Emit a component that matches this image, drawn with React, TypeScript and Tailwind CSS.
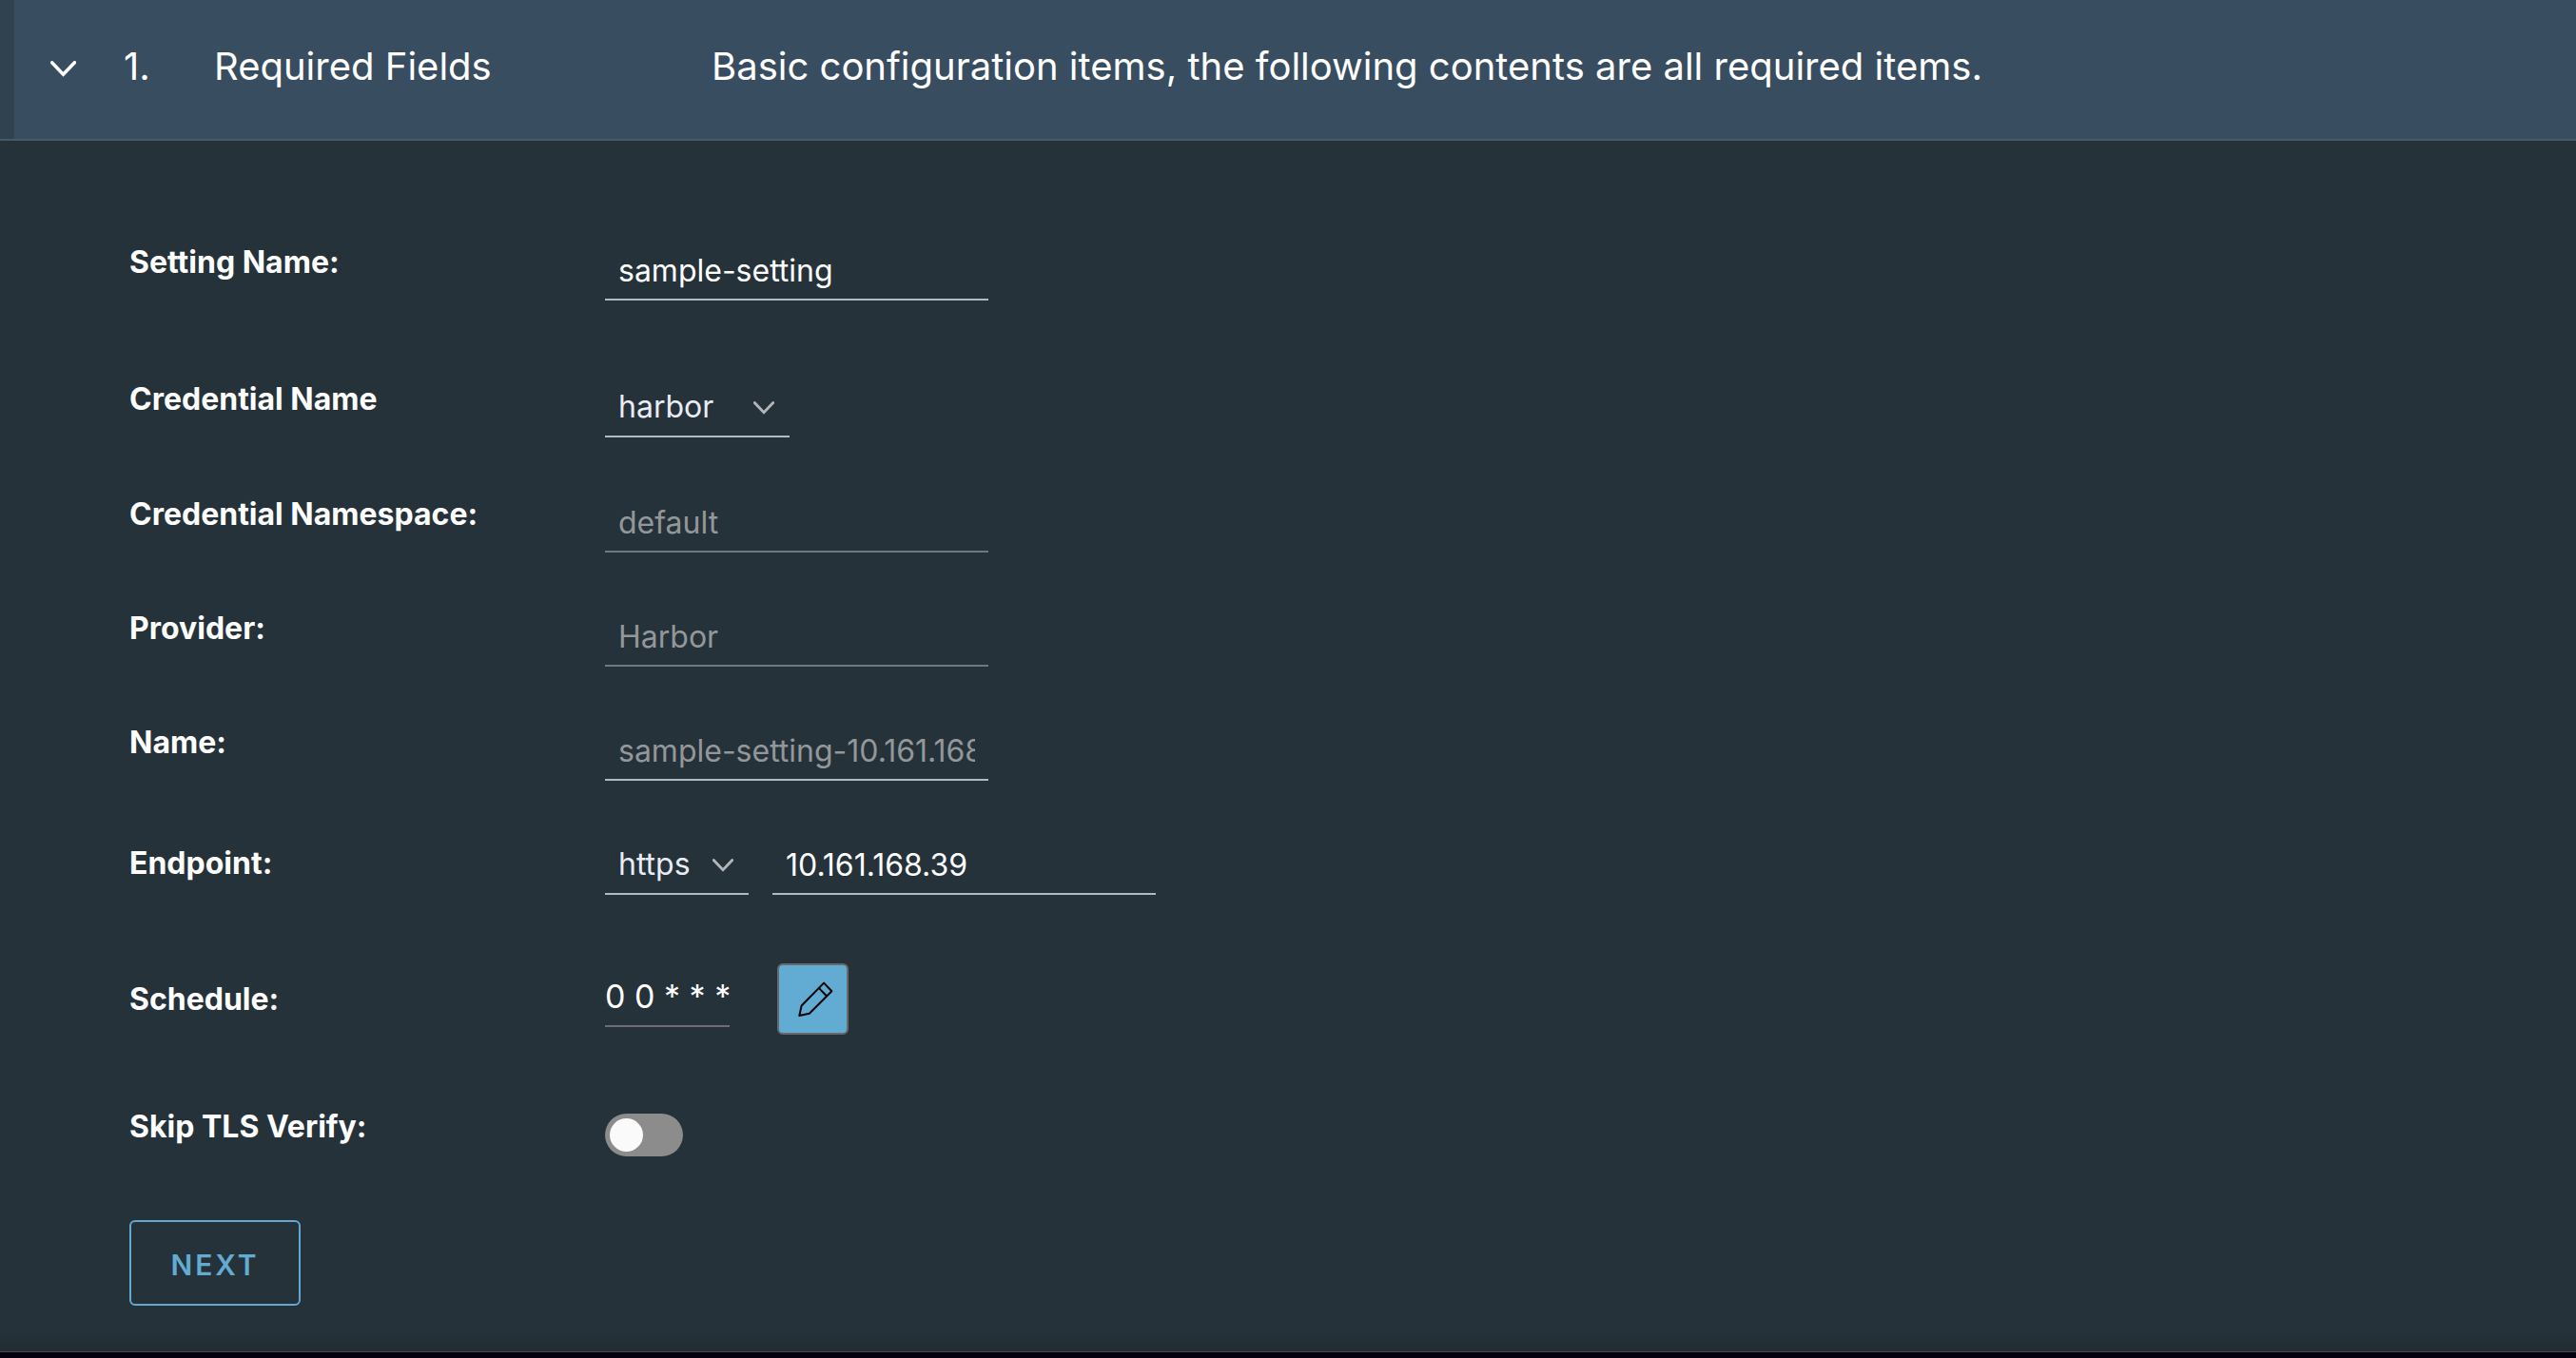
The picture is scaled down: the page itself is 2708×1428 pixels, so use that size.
import { useState, type ReactNode } from "react";

function Chevron({ className }: { className: string }) {
  return (
    <svg viewBox="0 0 26 16" fill="none" stroke="currentColor" strokeLinecap="round" className={className} aria-hidden="true">
      <path d="M1.5 1.5 13 13.5 24.5 1.5" strokeWidth="3.4" />
    </svg>
  );
}

function PencilIcon() {
  return (
    <svg viewBox="0 0 118 118" fill="none" stroke="currentColor" strokeWidth="6" strokeLinejoin="round" className="ml-1.5 size-[39px]" aria-hidden="true">
      <path d="M7 112 14 80 85 8 110 34 39 105Z" />
      <path d="M69 24 94 50" />
    </svg>
  );
}

const inputClass =
  "h-[58px] w-[403px] rounded-none border-b-2 border-[#adbbc4] bg-transparent px-[14px] pb-1 text-[32px] text-white outline-none disabled:border-[#6b7b83] disabled:text-[#949799]";

function Row({ label, htmlFor, className, labelClass = "", children }: {
  label: string;
  htmlFor: string;
  className: string;
  labelClass?: string;
  children: ReactNode;
}) {
  return (
    <div className={`grid grid-cols-[500px_1fr] ${className}`}>
      <label htmlFor={htmlFor} className={`text-[32px] leading-9 font-bold ${labelClass}`}>
        {label}
      </label>
      <div className="flex">{children}</div>
    </div>
  );
}

function Select({ id, options, className, label }: { id: string; options: string[]; className: string; label?: string }) {
  return (
    <div className={`relative ${className}`}>
      <select
        id={id}
        aria-label={label}
        className="h-[58px] w-full appearance-none rounded-none border-b-2 border-[#adbbc4] bg-transparent pr-9 pb-1 pl-[14px] text-[32px] text-[#e9ecf4] outline-none"
      >
        {options.map((o) => (
          <option key={o}>{o}</option>
        ))}
      </select>
      <Chevron className="pointer-events-none absolute top-5 right-4 h-[14px] w-[22px] text-[#b3b5b8]" />
    </div>
  );
}

export default function App() {
  const [name, setName] = useState("sample-setting");
  const [host, setHost] = useState("10.161.168.39");
  return (
    <div className="flex min-h-screen flex-col bg-[#25323a] font-['Inter',sans-serif] text-white">
      <header className="border-b-2 border-[#495a67] bg-[#384d60]">
        <button type="button" aria-expanded="true" className="flex h-[146px] w-full items-start border-l-[15px] border-[#30424f] pt-11 text-left text-[40px] leading-[52px]">
          <Chevron className="mt-5 ml-[38px] h-[17px] w-[27px]" />
          <span className="ml-[50px] w-[95px]">1.</span>
          <span className="w-[523px]">Required Fields</span>
          <span>Basic configuration items, the following contents are all required items.</span>
        </button>
      </header>

      <form className="flex flex-1 flex-col items-stretch px-[136px] pt-[110px]" onSubmit={(e) => e.preventDefault()}>
        <Row label="Setting Name:" htmlFor="setting" className="mb-[86px]">
          <input id="setting" className={inputClass} value={name} onChange={(e) => setName(e.target.value)} />
        </Row>
        <Row label="Credential Name" htmlFor="credential" className="mb-[63px]">
          <Select id="credential" options={["harbor"]} className="w-[194px]" />
        </Row>
        <Row label="Credential Namespace:" htmlFor="namespace" className="mb-[62px]">
          <input id="namespace" className={inputClass} value="default" disabled />
        </Row>
        <Row label="Provider:" htmlFor="provider" className="mb-[62px]">
          <input id="provider" className={inputClass} value="Harbor" disabled />
        </Row>
        <Row label="Name:" htmlFor="name" className="mb-[62px]">
          <input id="name" className={`${inputClass} placeholder:text-[#949799]`} placeholder={`${name}-${host}`} />
        </Row>
        <Row label="Endpoint:" htmlFor="host" className="mb-[72px] items-center" labelClass="pb-2">
          <Select id="scheme" label="Protocol" options={["https", "http"]} className="mr-[25px] w-[151px]" />
          <input id="host" className={inputClass} value={host} onChange={(e) => setHost(e.target.value)} />
        </Row>
        <Row label="Schedule:" htmlFor="schedule" className="mb-[79px] items-center">
          <output id="schedule" className="mr-[50px] h-[67px] w-[131px] border-b-2 border-[#6d6e72] pt-3 text-[34px] leading-[46px] whitespace-nowrap">
            0 0 * * *
          </output>
          <button type="button" aria-label="Edit schedule" className="flex size-[75px] items-center justify-center rounded-md border-2 border-[#66696d] bg-[#62abd3] text-black">
            <PencilIcon />
          </button>
        </Row>
        <Row label="Skip TLS Verify:" htmlFor="tls" className="mb-[67px]">
          <input
            id="tls"
            type="checkbox"
            role="switch"
            className="mt-1 h-[45px] w-[82px] appearance-none rounded-full bg-[#8c8c8c] p-[5px] before:block before:size-[35px] before:rounded-full before:bg-[#fafafa] checked:bg-[#60b515] checked:before:ml-[37px]"
          />
        </Row>
        <button type="submit" className="h-[90px] w-[180px] rounded-md border-2 border-[#62a8d0] pt-1 text-[30px] font-semibold tracking-widest text-[#62abd3]">
          NEXT
        </button>
      </form>
      <div className="h-6 bg-linear-to-b from-[#25323a] to-[#222c33]" />
      <footer className="h-[7px] border-t border-[#45484c] bg-[#05000f]" />
    </div>
  );
}
